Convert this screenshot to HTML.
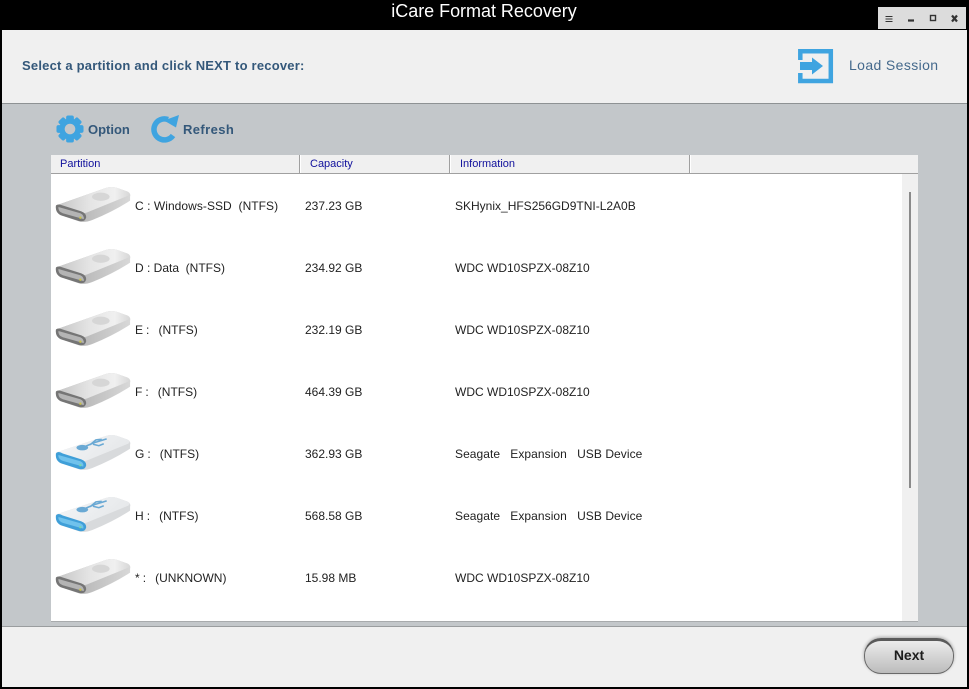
<!DOCTYPE html>
<html><head><meta charset="utf-8"><style>
html,body{margin:0;padding:0;width:969px;height:689px;overflow:hidden;background:#000;font-family:"Liberation Sans",sans-serif}
div,span{position:absolute;white-space:pre}
svg{position:absolute}
.t{font-size:12px;line-height:14px;color:#222}
.n{word-spacing:-.3px}
.s{letter-spacing:.06px}
.h{font-size:11px;line-height:14px;color:#10109c;top:157px}
.b{font-weight:bold;color:#34587a}
</style></head><body>
<svg width="0" height="0" style="position:absolute"><defs>
<linearGradient id="top" x1="0" y1="0.5" x2="1" y2="0.5"><stop offset="0" stop-color="#c4c4c4"/><stop offset="0.45" stop-color="#e4e4e4"/><stop offset="0.8" stop-color="#f0f0f0"/><stop offset="1" stop-color="#d8d8d8"/></linearGradient>
<linearGradient id="utop" x1="0" y1="0" x2="1" y2="0.4"><stop offset="0" stop-color="#f4f6f8"/><stop offset="1" stop-color="#e6e8ea"/></linearGradient>
<linearGradient id="side" x1="0" y1="0" x2="1" y2="0"><stop offset="0" stop-color="#a8a8a8"/><stop offset="1" stop-color="#d8d8d8"/></linearGradient>
<symbol id="hdd" viewBox="0 0 80 40">
<path d="M1 20 L52 2 Q58 0 64 2 L75 6 Q78 8 77 11 L77 15 Q60 26 38 35 Q30 38 24 36 L6 30 Q0 27 1 20Z" fill="url(#side)"/>
<path d="M1 20 L52 2 Q58 0 64 2 L75 6 Q78 8 75 10 L33 27 Q28 29 22 27 L3 21Z" fill="url(#top)"/>
<path d="M1 20 Q3 18 8 20 L27 26 Q32 28 32 32 Q31 37 25 36 L6 30 Q0 27 1 20Z" fill="#757575"/>
<path d="M3.500 21.500 L26 28 Q30 30 29.500 34 L8 28 Q3 26 3.500 21.500Z" fill="#b4b4b4"/>
<ellipse cx="47" cy="11" rx="9" ry="4.200" fill="#d6d6d6"/>
<circle cx="26" cy="32.500" r="1.200" fill="#c9c34a"/>
</symbol>
<symbol id="usb" viewBox="0 0 80 40">
<path d="M1 19 L52 2 Q58 0 64 2 L75 6 Q78 8 77 11 L77 15 Q60 26 38 35 Q30 38 24 36 L6 30 Q0 27 1 19Z" fill="#d8dadc"/>
<path d="M1 19 L52 2 Q58 0 64 2 L75 6 Q78 8 75 10 L33 27 Q28 29 22 27 L3 21Z" fill="url(#utop)"/>
<path d="M1 20 Q3 17 8 20 L27 26 Q32 28 32 32 Q31 37 25 36 L6 30 Q0 27 1 20Z" fill="#3f9fd8"/>
<path d="M3.500 21.500 L26 28 Q30 30 29 33.500 L8 27.500 Q3 25.500 3.500 21.500Z" fill="#70c2ec"/>
<ellipse cx="28" cy="14" rx="6" ry="2.800" fill="#6aa9d4"/>
<path d="M28 14 L40 9 L53 5 M36 11 L42 6 L48 5.500 M39 10.500 L45 12 L50 10" fill="none" stroke="#6aa9d4" stroke-width="1.600"/>
<circle cx="26" cy="32" r="1.200" fill="#7ad8a8"/>
</symbol>
</defs></svg>

<div style="left:2px;top:30px;width:965px;height:73px;background:#f0f0f0"></div>
<div style="left:2px;top:103px;width:965px;height:1px;background:#8e9294"></div>
<div style="left:2px;top:104px;width:965px;height:522px;background:#c3c7ca"></div>
<div style="left:2px;top:626px;width:965px;height:1px;background:#9a9d9f"></div>
<div style="left:2px;top:627px;width:965px;height:60px;background:#f0f0f0"></div>

<div style="left:0;top:0;width:968px;text-align:center;color:#fff;font-size:18px;line-height:22px;letter-spacing:-.03px">iCare Format Recovery</div>

<!-- window controls -->
<div style="left:878px;top:7px;width:88px;height:22px;background:#dcdcdc"></div>
<svg style="left:878px;top:7px" width="88" height="22" fill="none" stroke="#333">
<path d="M7.500 9.500h7M7.500 12h7M7.500 14.500h7" stroke-width="1"/>
<path d="M30 13.500h6" stroke-width="2.200"/>
<rect x="52.500" y="8.500" width="5" height="5" stroke-width="1.400"/>
<path d="M74 8.500l5 6M79 8.500l-5 6" stroke-width="2.200"/>
</svg>

<div class="b" style="left:22px;top:58px;font-size:13px;line-height:16px;letter-spacing:.21px">Select a partition and click NEXT to recover:</div>

<!-- load session -->
<svg style="left:797px;top:48px" width="37" height="37" fill="none">
<path d="M3.300 12V3.300H33.800V33H3.300V25" stroke="#3fa4e0" stroke-width="4.500"/>
<path d="M3 14H15V9.500L26 18L15 26.500V22H3Z" fill="#3fa4e0"/>
</svg>
<div style="left:849px;top:56px;font-size:14px;line-height:18px;color:#44698c;letter-spacing:.38px">Load Session</div>

<!-- toolbar -->
<svg style="left:56px;top:115px" width="28" height="28" viewBox="0 0 29 28">
<g fill="#3fa4e0"><circle cx="14.500" cy="14" r="11"/>
<rect x="10.500" y="0" width="8" height="28" rx="2"/>
<rect x="10.500" y="0" width="8" height="28" rx="2" transform="rotate(45 14.500 14)"/>
<rect x="10.500" y="0" width="8" height="28" rx="2" transform="rotate(90 14.500 14)"/>
<rect x="10.500" y="0" width="8" height="28" rx="2" transform="rotate(135 14.500 14)"/></g>
<circle cx="14.500" cy="14" r="5.500" fill="#c3c7ca"/>
</svg>
<div class="b" style="left:88px;top:121px;font-size:13px;line-height:17px">Option</div>
<svg style="left:151px;top:114px" width="30" height="30" viewBox="0 0 30 30" fill="none">
<path d="M22 21.500A10.500 10.500 0 1 1 17 5.500" stroke="#3fa4e0" stroke-width="5.500"/>
<path d="M13 6.500L28 1L25 13.500Z" fill="#3fa4e0"/>
</svg>
<div class="b" style="left:183px;top:121px;font-size:13px;line-height:17px;letter-spacing:.4px">Refresh</div>

<!-- table -->
<div style="left:51px;top:155px;width:867px;height:18px;background:#f0f0f0"></div>
<div style="left:51px;top:173px;width:867px;height:1px;background:#a0a0a0"></div>
<div style="left:299px;top:155px;width:1px;height:19px;background:#a0a0a0"></div>
<div style="left:300px;top:155px;width:1px;height:18px;background:#fff"></div>
<div style="left:449px;top:155px;width:1px;height:19px;background:#a0a0a0"></div>
<div style="left:450px;top:155px;width:1px;height:18px;background:#fff"></div>
<div style="left:689px;top:155px;width:1px;height:19px;background:#a0a0a0"></div>
<div style="left:690px;top:155px;width:1px;height:18px;background:#fff"></div>
<div class="h" style="left:60px">Partition</div>
<div class="h" style="left:310px">Capacity</div>
<div class="h" style="left:460px">Information</div>
<div style="left:51px;top:174px;width:851px;height:447px;background:#fff"></div>
<div style="left:902px;top:174px;width:16px;height:447px;background:#f0f0f0"></div>
<div style="left:909px;top:192px;width:2px;height:296px;background:#8a8a8a"></div>
<div style="left:51px;top:621px;width:867px;height:1px;background:#a8abad"></div>

<svg style="left:55px;top:186px" width="78" height="39"><use href="#hdd"/></svg>
<svg style="left:55px;top:248px" width="78" height="39"><use href="#hdd"/></svg>
<svg style="left:55px;top:310px" width="78" height="39"><use href="#hdd"/></svg>
<svg style="left:55px;top:372px" width="78" height="39"><use href="#hdd"/></svg>
<svg style="left:55px;top:434px" width="78" height="39"><use href="#usb"/></svg>
<svg style="left:55px;top:496px" width="78" height="39"><use href="#usb"/></svg>
<svg style="left:55px;top:558px" width="78" height="39"><use href="#hdd"/></svg>

<div class="t" style="left:135px;top:199px;letter-spacing:.05px">C : Windows-SSD  (NTFS)</div><div class="t" style="left:305px;top:199px">237.23 GB</div><div class="t" style="left:455px;top:199px">SKHynix_HFS256GD9TNI-L2A0B</div>
<div class="t" style="left:135px;top:261px">D : Data  (NTFS)</div><div class="t" style="left:305px;top:261px">234.92 GB</div><div class="t" style="left:455px;top:261px">WDC WD10SPZX-08Z10</div>
<div class="t n" style="left:135px;top:323px">E :   (NTFS)</div><div class="t" style="left:305px;top:323px">232.19 GB</div><div class="t" style="left:455px;top:323px">WDC WD10SPZX-08Z10</div>
<div class="t n" style="left:135px;top:385px">F :   (NTFS)</div><div class="t" style="left:305px;top:385px">464.39 GB</div><div class="t" style="left:455px;top:385px">WDC WD10SPZX-08Z10</div>
<div class="t n" style="left:135px;top:447px">G :   (NTFS)</div><div class="t" style="left:305px;top:447px">362.93 GB</div><div class="t s" style="left:455px;top:447px">Seagate   Expansion   USB Device</div>
<div class="t n" style="left:135px;top:509px">H :   (NTFS)</div><div class="t" style="left:305px;top:509px">568.58 GB</div><div class="t s" style="left:455px;top:509px">Seagate   Expansion   USB Device</div>
<div class="t n" style="left:135px;top:571px">* :   (UNKNOWN)</div><div class="t" style="left:305px;top:571px">15.98 MB</div><div class="t" style="left:455px;top:571px">WDC WD10SPZX-08Z10</div>

<!-- next button -->
<div style="left:864px;top:638px;width:88px;height:32px;border-radius:17px;border:1px solid #6a6a6a;border-top:3px solid #5a5a5a;background:linear-gradient(#ececec,#d6d6d6 45%,#bcbcbc);box-shadow:0 -1px 3px rgba(0,0,0,.3)"></div>
<div style="left:864px;top:647px;width:90px;text-align:center;font-weight:bold;font-size:14px;line-height:17px;color:#1c1c1c">Next</div>
</body></html>
